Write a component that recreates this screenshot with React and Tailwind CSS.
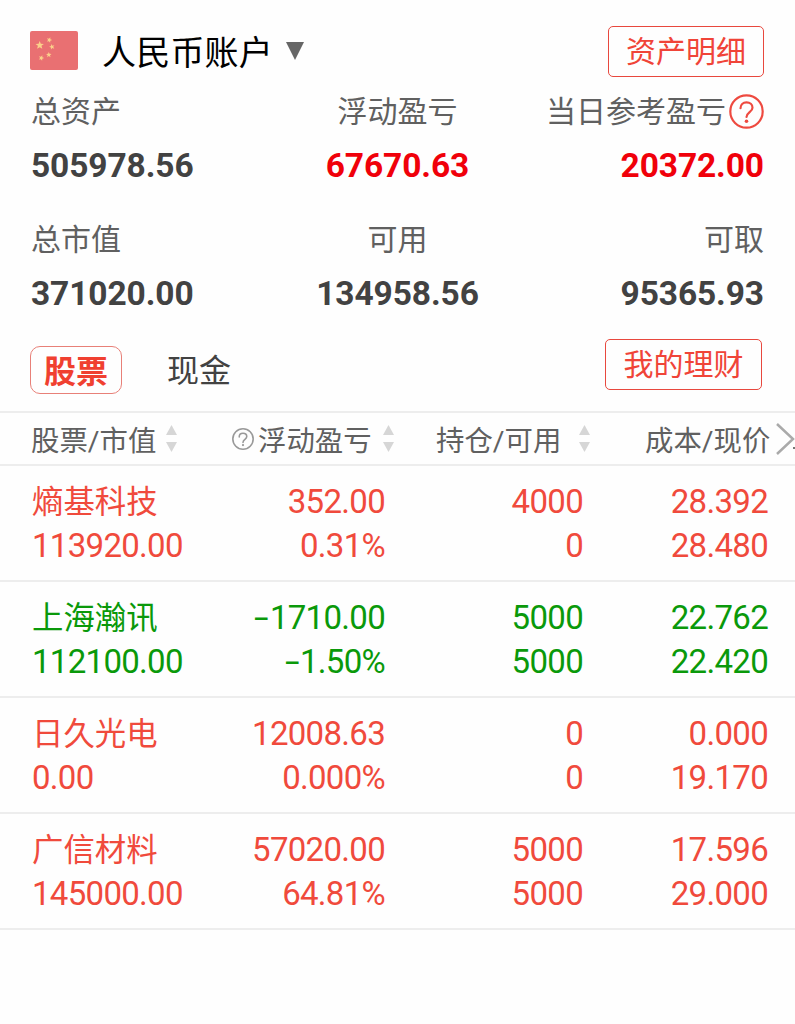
const summary = [
  { label: '总资产', value: '505978.56', align: 'items-start', color: 'text-[#424242]' },
  { label: '浮动盈亏', value: '67670.63', align: 'items-center', color: 'text-[#f0000a]' },
  { label: '当日参考盈亏', value: '20372.00', align: 'items-end', color: 'text-[#f0000a]', help: true },
  { label: '总市值', value: '371020.00', align: 'items-start', color: 'text-[#424242]' },
  { label: '可用', value: '134958.56', align: 'items-center', color: 'text-[#424242]' },
  { label: '可取', value: '95365.93', align: 'items-end', color: 'text-[#424242]' },
];

const holdings = [
  { name: '熵基科技', market: '113920.00', profit: '352.00', rate: '0.31%', amount: '4000', usable: '0', cost: '28.392', price: '28.480' },
  { name: '上海瀚讯', market: '112100.00', profit: '-1710.00', rate: '-1.50%', amount: '5000', usable: '5000', cost: '22.762', price: '22.420', down: true },
  { name: '日久光电', market: '0.00', profit: '12008.63', rate: '0.000%', amount: '0', usable: '0', cost: '0.000', price: '19.170' },
  { name: '广信材料', market: '145000.00', profit: '57020.00', rate: '64.81%', amount: '5000', usable: '5000', cost: '17.596', price: '29.000' },
];

const STAR = 'M0 -1 L0.25 -0.34 L0.95 -0.31 L0.4 0.13 L0.59 0.81 L0 0.42 L-0.59 0.81 L-0.4 0.13 L-0.95 -0.31 L-0.25 -0.34 Z';

const Flag = () => (
  <svg width="48" height="39" viewBox="0 0 48 39" className="mb-[2px]">
    <rect width="48" height="39" rx="2" fill="#e97072" />
    <g fill="#fbd08a">
      <path d={STAR} transform="translate(9.7 14.3) scale(4.4)" />
      <path d={STAR} transform="translate(19.3 9) rotate(20) scale(2.9)" />
      <path d={STAR} transform="translate(22 15.8) rotate(-15) scale(2.9)" />
      <path d={STAR} transform="translate(18.8 23.8) scale(2.9)" />
      <path d={STAR} transform="translate(11.3 27) rotate(20) scale(2.9)" />
    </g>
  </svg>
);

const Help = ({ size, stroke, color }) => (
  <svg width={size} height={size} viewBox="0 0 35 35" fill="none" stroke={color} strokeWidth={stroke} className="shrink-0">
    <circle cx="17.5" cy="17.5" r="16.2" />
    <path d="M11.5 14.2c0-3.6 2.5-5.8 6-5.8s6 2.2 6 5.3c0 4.2-6 4.7-6 9.3" strokeLinecap="round" />
    <circle cx="17.5" cy="27.2" r="1.8" fill={color} stroke="none" />
  </svg>
);

const Sort = () => (
  <svg width="11" height="27" viewBox="0 0 11 27" fill="#d6d6d6">
    <path d="M5.5 0 11 10H0z" />
    <path d="M5.5 27 11 17H0z" />
  </svg>
);

const Num = ({ children }) =>
  children.startsWith('-') ? (
    <>
      <span className="mr-[2px] inline-block origin-right scale-x-[1.6]">-</span>
      {children.slice(1)}
    </>
  ) : (
    children
  );

const Cell = ({ top, bottom }) => (
  <div className="text-right">
    <div><Num>{top}</Num></div>
    <div><Num>{bottom}</Num></div>
  </div>
);

const App = () => {
  return (
    <div className="h-[1024px] w-[795px] overflow-hidden bg-[#fefefe] font-[Roboto,'Noto_Sans_CJK_SC',sans-serif]">
      <header className="flex h-[77px] items-end justify-between pl-[30px] pr-[31px]">
        <div className="flex h-[51px] items-center">
          <Flag />
          <span className="ml-[24px] pt-[3px] text-[34px] leading-[51px] tracking-[0.2px] text-black">人民币账户</span>
          <svg width="18" height="18" viewBox="0 0 18 18" className="mb-[2px] ml-[13px]">
            <path d="M0 0h18L9 18z" fill="#666" />
          </svg>
        </div>
        <button className="h-[51px] w-[156px] rounded-[5px] border-[1.5px] border-[#e8483e] pt-px text-[30px] leading-[48px] text-[#f04438]">
          资产明细
        </button>
      </header>

      <section className="grid grid-cols-3 pl-[31px] pr-[31px] pt-[14px]">
        {summary.map((item) => (
          <div key={item.label} className={`flex h-[127.5px] flex-col ${item.align}`}>
            <div className="flex h-[40px] items-center gap-[3px] whitespace-nowrap text-[30px] leading-[40px] text-[#606060]">
              <span className="pt-[2px]">{item.label}</span>
              {item.help && <Help size={35} stroke={2.2} color="#ee4a40" />}
            </div>
            <div className={`mt-[14px] text-[33.5px] font-bold leading-[41px] tracking-[-0.1px] ${item.color}`}>{item.value}</div>
          </div>
        ))}
      </section>

      <nav className="flex h-[65px] items-start pl-[30px] pr-[33px]">
        <button className="h-[48px] w-[92px] rounded-[10px] border border-[#e88078] pt-[2px] text-[32px] font-bold leading-[46px] text-[#f04030]">
          股票
        </button>
        <button className="ml-[45px] h-[48px] pt-px text-[32px] leading-[48px] text-[#424242]">现金</button>
        <button className="-mt-[7px] ml-auto h-[51px] w-[157px] rounded-[5px] border-[1.5px] border-[#e8483e] pt-px text-[30px] leading-[48px] text-[#f04438]">
          我的理财
        </button>
      </nav>

      <div className="grid h-[55px] grid-cols-[201px_204px_209px_150px] items-center border-y-2 border-[#ededed] pl-[31px] text-[28.4px] leading-[43px] text-[#606060]">
        <div className="flex items-center gap-[10px]">
          <span className="pt-[5px]">股票/市值</span>
          <Sort />
        </div>
        <div className="flex items-center">
          <Help size={22} stroke={2.5} color="#999" />
          <span className="ml-[4px] mr-[11px] pt-[5px]">浮动盈亏</span>
          <Sort />
        </div>
        <div className="flex items-center gap-[18px]">
          <span className="pt-[5px]">持仓/可用</span>
          <Sort />
        </div>
        <div className="flex items-center gap-[6px] whitespace-nowrap">
          <span className="pt-[5px]">成本/现价</span>
          <svg width="19" height="34" viewBox="0 0 19 34" fill="none" className="shrink-0">
            <path d="M1 2 17 17 1 32" stroke="#aaa" strokeWidth="2.5" />
            <path d="M17 26h2" stroke="#777" strokeWidth="2" />
          </svg>
        </div>
      </div>

      {holdings.map((row) => (
        <div
          key={row.name}
          className={`grid h-[116px] grid-cols-[193px_160px_198px_185px] border-b-2 border-[#ededed] pl-[32px] pt-[14px] text-[33px] leading-[44px] tracking-[-0.7px] ${row.down ? 'text-[#0a990a]' : 'text-[#f04a3c]'}`}
        >
          <div>
            <div className="h-[44px] text-[31.4px] leading-[45px] tracking-normal">{row.name}</div>
            <div>{row.market}</div>
          </div>
          <Cell top={row.profit} bottom={row.rate} />
          <Cell top={row.amount} bottom={row.usable} />
          <Cell top={row.cost} bottom={row.price} />
        </div>
      ))}
    </div>
  );
};

export default App;
